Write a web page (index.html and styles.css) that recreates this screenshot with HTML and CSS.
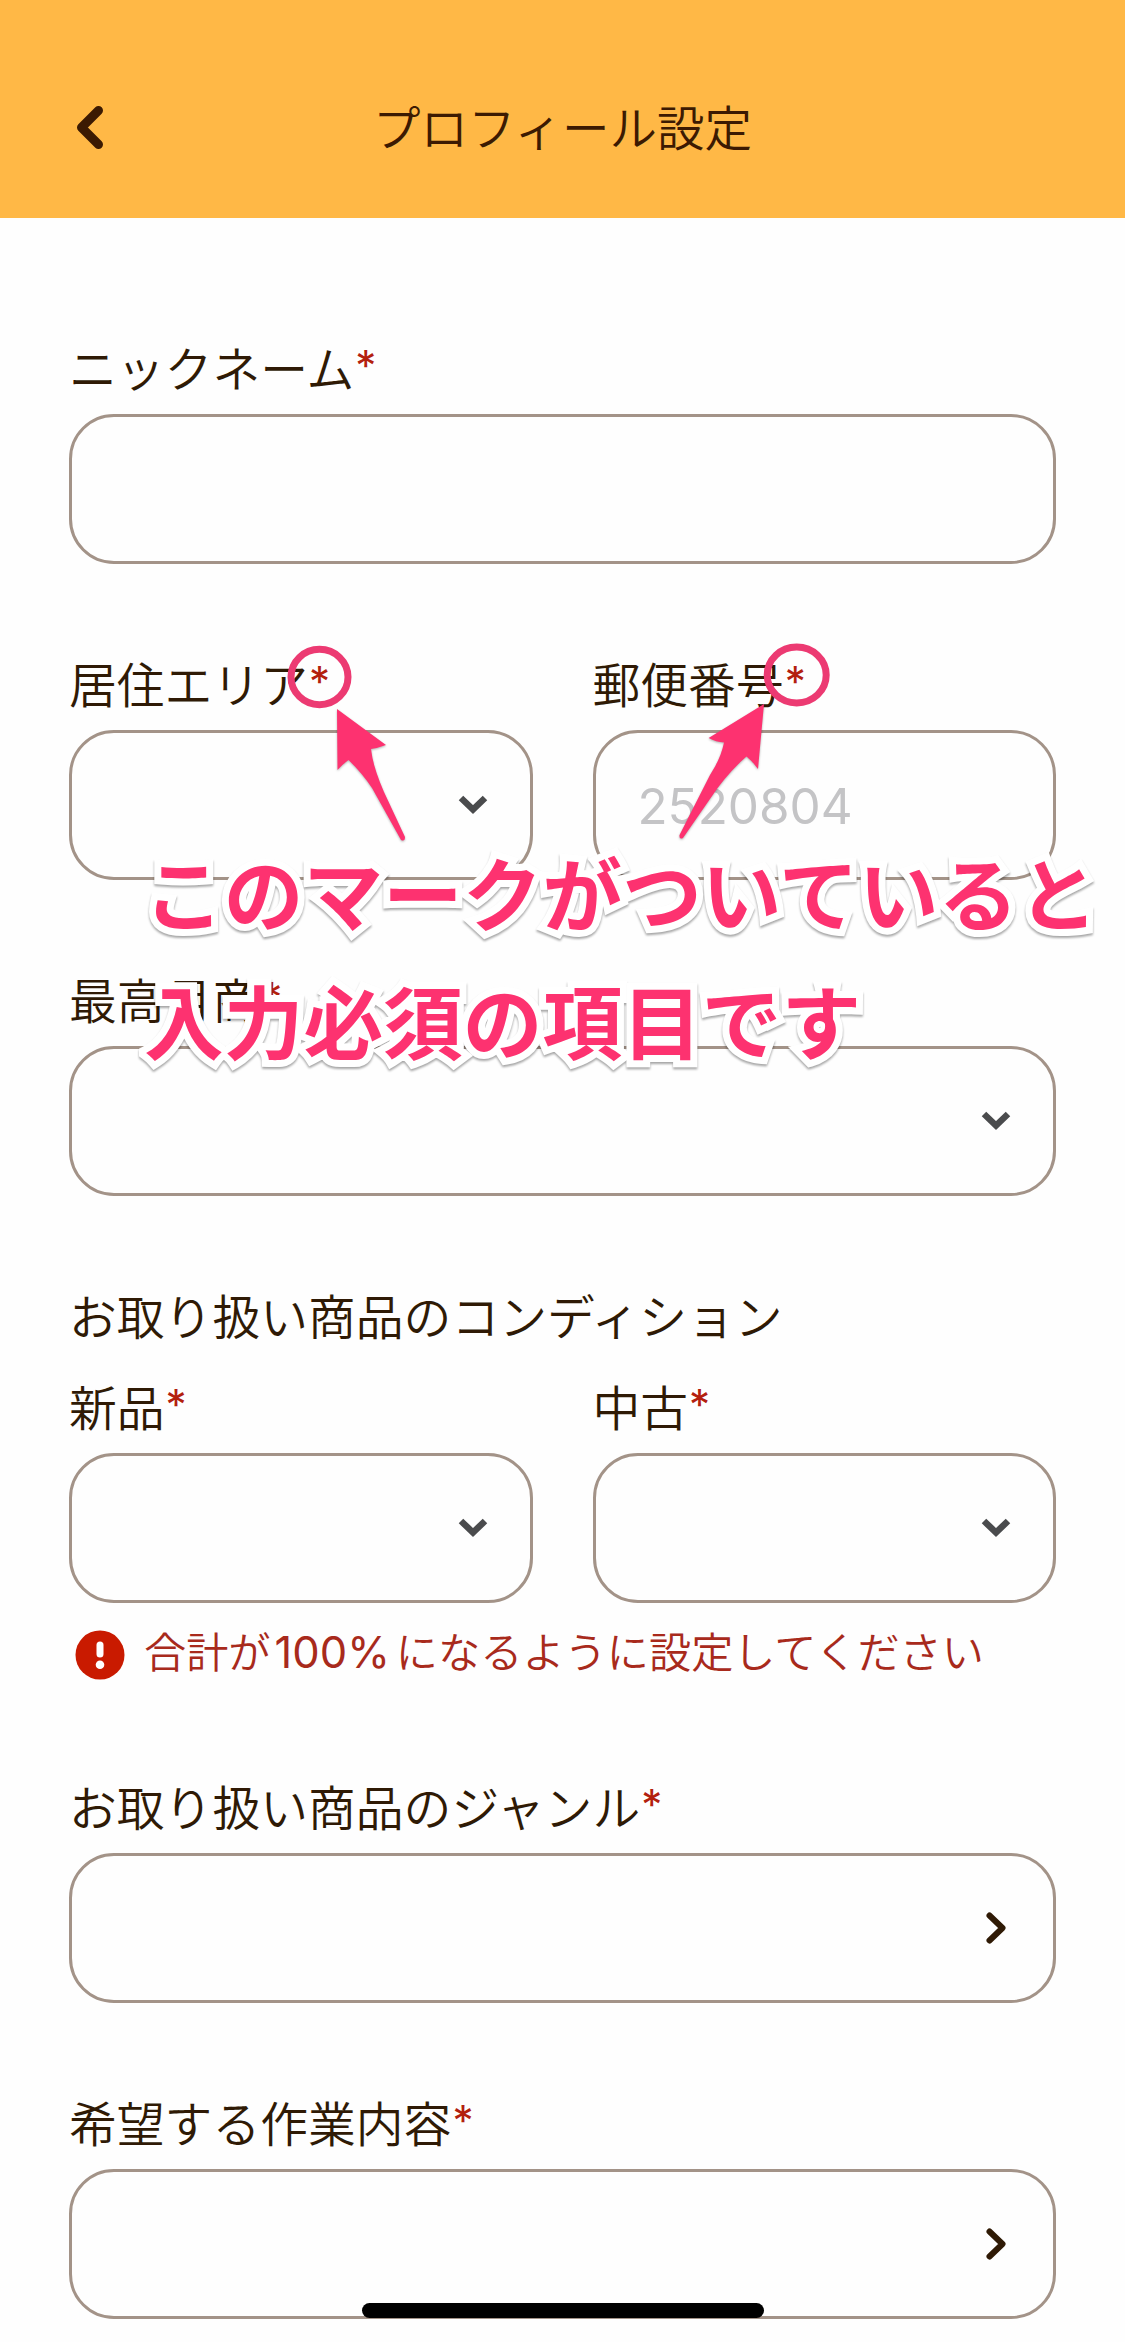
FILE: index.html
```
<!DOCTYPE html>
<html lang="ja">
  <head>
    <meta charset="utf-8">
    <title>プロフィール設定</title>
    <link rel="stylesheet" href="styles.css">
  </head>
  <body>
    <div class="screen">
      <header class="header">
        <svg class="back" width="30" height="48" viewBox="0 0 30 48">
          <path d="M23.5 7.5 L6.5 24.5 L23.5 41.5"/>
        </svg>
        <h1 class="title">プロフィール設定</h1>
      </header>

      <main class="form">
        <div class="field">
          <div class="label">ニックネーム<span class="required">*</span></div>
          <div class="box"></div>
        </div>

        <div class="row">
          <div class="field">
            <div class="label">居住エリア<span class="required">*</span></div>
            <div class="box">
              <svg class="down" width="30" height="20" viewBox="0 0 30 20"><path d="M3 3 L15 14.5 L27 3"/></svg>
            </div>
          </div>
          <div class="field">
            <div class="label">郵便番号<span class="required">*</span></div>
            <div class="box"><span class="placeholder">2520804</span></div>
          </div>
        </div>

        <div class="field">
          <div class="label">最高月商<span class="required">*</span></div>
          <div class="box">
            <svg class="down" width="30" height="20" viewBox="0 0 30 20"><path d="M3 3 L15 14.5 L27 3"/></svg>
          </div>
        </div>

        <section class="condition">
          <h2 class="label">お取り扱い商品のコンディション</h2>
          <div class="row">
            <div class="field">
              <div class="label">新品<span class="required">*</span></div>
              <div class="box">
                <svg class="down" width="30" height="20" viewBox="0 0 30 20"><path d="M3 3 L15 14.5 L27 3"/></svg>
              </div>
            </div>
            <div class="field">
              <div class="label">中古<span class="required">*</span></div>
              <div class="box">
                <svg class="down" width="30" height="20" viewBox="0 0 30 20"><path d="M3 3 L15 14.5 L27 3"/></svg>
              </div>
            </div>
          </div>
          <div class="error">
            <svg width="50" height="50" viewBox="0 0 50 50">
              <circle cx="25" cy="25" r="24.5" fill="#c91a00"/>
              <rect x="21.5" y="11.5" width="7" height="16" rx="3.5" fill="#fff"/>
              <circle cx="25" cy="34.8" r="4.3" fill="#fff"/>
            </svg>
            <p class="message">合計が<span class="number">100%</span>になるように設定してください</p>
          </div>
        </section>

        <div class="field">
          <div class="label">お取り扱い商品のジャンル<span class="required">*</span></div>
          <div class="box">
            <svg class="next" width="30" height="36" viewBox="0 0 30 36"><path d="M8.5 5.5 L21.5 18 L8.5 30.5"/></svg>
          </div>
        </div>

        <div class="field">
          <div class="label">希望する作業内容<span class="required">*</span></div>
          <div class="box">
            <svg class="next" width="30" height="36" viewBox="0 0 30 36"><path d="M8.5 5.5 L21.5 18 L8.5 30.5"/></svg>
          </div>
        </div>
      </main>
      <div class="home-bar"></div>
    </div>

    <!-- notes drawn over the form -->
    <svg class="marks" width="1132" height="400" viewBox="0 600 1132 400">
      <ellipse cx="319.5" cy="677" rx="28.5" ry="27.7"/>
      <ellipse cx="796.7" cy="675" rx="29.5" ry="28"/>
      <path d="M337 709 L386 745 Q378 748 371 749 Q373 767 384 792 L405 837 Q405 842 401 840 L372 788 Q362 773 348.5 760 Q343 764 337.5 770 Z"/>
      <path d="M764 704 L708.6 738 Q716 742 724 742.5 Q721 758 710 775 L679.5 835 Q679 840 683 838 L717.6 788 Q731 770 746.5 756.6 Q753 762 758 769 Z"/>
    </svg>
    <p class="note">このマークがついていると<br>入力必須の項目です</p>
  </body>
</html>
```

FILE: styles.css
```
* {
  box-sizing: border-box;
}
body {
  position: relative;
  margin: 0;
  height: 2342px;
  overflow: hidden;
  background-color: #fff;
  color: #2f1a05;
  font-family: "Noto Sans CJK JP", sans-serif;
  font-weight: 350;
}
h1, h2, p {
  margin: 0;
  font-weight: 350;
}
svg {
  display: block;
}
.screen {
  position: relative;
  width: 1125px;
  height: 2342px;
  background-color: #fefefe;
}
.header {
  display: flex;
  align-items: center;
  height: 218px;
  padding: 36px 75px 0;
  background-color: #ffb846;
}
.back {
  fill: none;
  stroke: #3c1a02;
  stroke-width: 9;
  stroke-linecap: round;
  stroke-linejoin: round;
}
.title {
  flex: 1;
  margin: 0 30px 2px 0;
  text-align: center;
  color: #3c1a02;
  font-size: 47.5px;
  line-height: 60px;
}
.form {
  display: flex;
  flex-direction: column;
  gap: 89px;
  padding: 119px 69px 0;
}
.row {
  display: flex;
  gap: 60px;
}
.field {
  flex: 1;
}
.label {
  height: 60px;
  font-size: 47.8px;
  line-height: 60px;
  white-space: nowrap;
}
.field .label {
  margin-bottom: 17px;
}
.required {
  margin-left: 1px;
  color: #b3200e;
  font-family: Inter, sans-serif;
  font-size: 42px;
  font-weight: 400;
  line-height: 1;
  vertical-align: 6px;
}
.box {
  display: flex;
  align-items: center;
  height: 150px;
  padding: 0 42px;
  border: 3px solid #a39388;
  border-radius: 45px;
}
.down, .next {
  margin-left: auto;
  fill: none;
  stroke: #4a4b4d;
  stroke-width: 6.5;
}
.next {
  stroke: #2f1a05;
  stroke-linecap: round;
  stroke-linejoin: round;
  stroke-width: 6;
}
.placeholder {
  padding-top: 2px;
  color: #c4c4c6;
  font-family: Inter, sans-serif;
  font-size: 49.4px;
  font-weight: 400;
}
.condition .row {
  margin-top: 31px;
}
.error {
  display: flex;
  align-items: center;
  gap: 19px;
  height: 60px;
  margin-top: 22px;
  margin-bottom: 2px;
  padding-left: 6px;
  color: #a82a1c;
}
.message {
  margin-bottom: 9px;
  font-size: 42.2px;
  line-height: 60px;
  white-space: nowrap;
}
.number {
  margin: 0 6px 0 4px;
  font-family: Inter, sans-serif;
  font-size: 43.5px;
  font-weight: 400;
}
.home-bar {
  position: absolute;
  left: 362px;
  bottom: 24px;
  width: 402px;
  height: 15px;
  border-radius: 8px;
  background-color: #000;
}
.marks {
  position: absolute;
  left: 0;
  top: 600px;
}
.marks ellipse {
  fill: none;
  stroke: #ec3a72;
  stroke-width: 7;
}
.marks path {
  fill: #fd3270;
  filter: drop-shadow(0 1px 1px rgba(0, 0, 0, 0.3));
}
.note {
  position: absolute;
  left: 144px;
  top: 827px;
  color: #fd3270;
  font-size: 79.7px;
  font-weight: 700;
  line-height: 128px;
  white-space: nowrap;
  -webkit-text-stroke: 14px #fff;
  paint-order: stroke fill;
  filter: drop-shadow(0 2px 1px rgba(0, 0, 0, 0.35));
}
```
